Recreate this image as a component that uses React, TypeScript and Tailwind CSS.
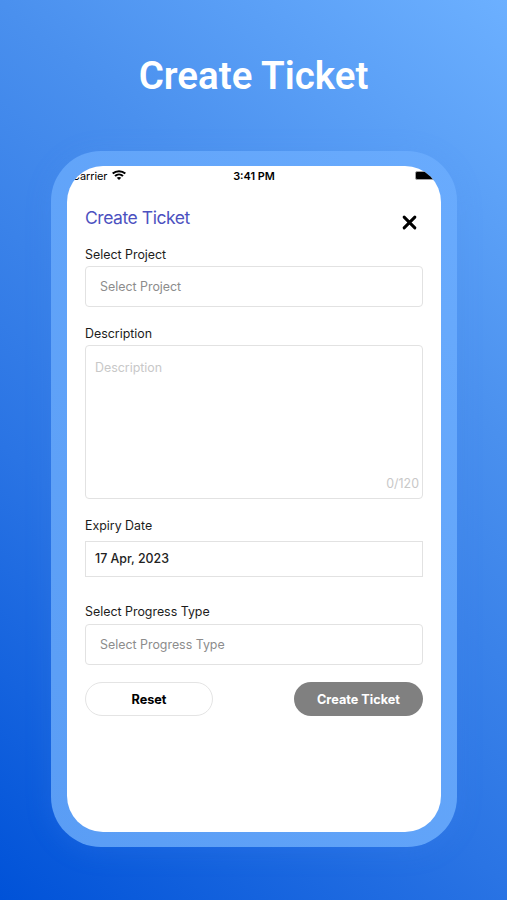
const inter = "font-['Inter','Liberation_Sans',sans-serif]";

function StatusBar() {
  return (
    <div className="grid h-[20px] grid-cols-3 items-center text-[10.9px] leading-none text-black">
      <div className="flex items-center gap-[5px] pt-[1px] pl-[5px]">
        <span className="tracking-[-0.05px]">Carrier</span>
        <svg className="-mt-[3px]" width="14" height="10" viewBox="0 0 14 10" fill="none" stroke="#000" strokeWidth="2">
          <path d="M0.7 3.6C4.2 0.3 9.8 0.3 13.3 3.6" />
          <path d="M3 6C5.3 3.9 8.7 3.9 11 6" />
          <path d="M7 10L4.7 7.8C6 6.7 8 6.7 9.3 7.8Z" fill="#000" stroke="none" />
        </svg>
      </div>
      <div className="pt-[1px] text-center font-semibold">3:41 PM</div>
      <div className="-mt-[1px] flex justify-end pr-[3px]">
        <div className="h-[9px] w-[23px] rounded-[2px] border border-[#a3a3a3] bg-black" />
      </div>
    </div>
  );
}

function Label({ text }: { text: string }) {
  return <div className="h-[16px] text-[12.4px] leading-[18px] text-[#1c1c1c]">{text}</div>;
}

function Select({ placeholder }: { placeholder: string }) {
  return (
    <div className="flex h-[41px] items-center rounded-[4px] border border-[#e2e2e2] pt-[2px] pl-[14px] text-[12.4px] text-[#8c8c8c]">
      {placeholder}
    </div>
  );
}

export default function App() {
  return (
    <main className="h-[900px] w-[507px] overflow-hidden bg-[linear-gradient(41deg,#0052d8_0%,#2a74e4_34%,#4a90ee_67%,#6cb0ff_100%)]">
      <h1 className="pt-[52px] text-center font-['Roboto',sans-serif] text-[38.5px] leading-[48px] font-semibold text-white">
        Create Ticket
      </h1>

      <div className="mt-[51px] ml-[51px] h-[696px] w-[406px] rounded-[50px] bg-linear-to-bl from-[#69abfd] to-[#5a9df5] px-[16px] py-[15px] shadow-[0_4px_28px_rgba(90,150,245,0.15)]">
        <div className={`h-[666px] overflow-hidden rounded-[36px] bg-white ${inter}`}>
          <StatusBar />

          <div className="px-[18px]">
            <div className="mt-[20px] flex h-[32px] items-start justify-between">
              <h2 className="text-[17.5px] leading-[24px] tracking-[-0.45px] text-[#4c51c0]">Create Ticket</h2>
              <svg className="mt-[9px] mr-[6px]" width="15" height="15" viewBox="0 0 14 14" stroke="#000" strokeWidth="2.8" strokeLinecap="round">
                <path d="M2 2L12 12M12 2L2 12" />
              </svg>
            </div>

            <div className="mt-[8px]">
              <Label text="Select Project" />
              <div className="mt-[4px]">
                <Select placeholder="Select Project" />
              </div>
            </div>

            <div className="mt-[18px]">
              <Label text="Description" />
              <div className="mt-[4px] flex h-[154px] flex-col justify-between rounded-[4px] border border-[#e2e2e2] pt-[13px] pr-[3px] pb-[5px] pl-[9px] text-[12.4px] leading-[18px] text-[#c8c8c8]">
                <span>Description</span>
                <span className="self-end">0/120</span>
              </div>
            </div>

            <div className="mt-[18px]">
              <Label text="Expiry Date" />
              <div className="mt-[8px] flex h-[36px] items-center border border-[#e2e2e2] pt-[1px] pl-[9px] text-[12.4px] font-medium text-[#222]">
                17 Apr, 2023
              </div>
            </div>

            <div className="mt-[26px]">
              <Label text="Select Progress Type" />
              <div className="mt-[5px]">
                <Select placeholder="Select Progress Type" />
              </div>
            </div>

            <div className="mt-[17px] flex justify-between text-[12.7px] font-bold">
              <button className="h-[34px] w-[128px] rounded-full border border-[#e4e4e4] pt-[1px] text-black">Reset</button>
              <button className="h-[34px] w-[129px] rounded-full bg-[#808080] pt-[1px] text-white">Create Ticket</button>
            </div>
          </div>
        </div>
      </div>
    </main>
  );
}
